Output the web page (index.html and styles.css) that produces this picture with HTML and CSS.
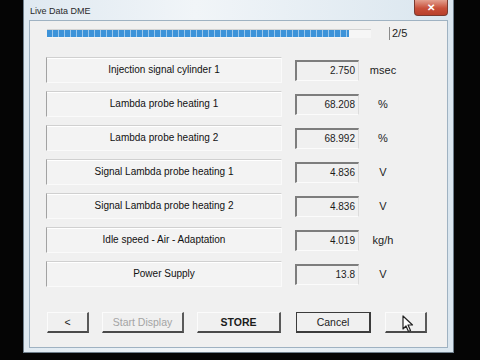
FILE: index.html
```html
<!DOCTYPE html>
<html lang="en">
<head>
    <meta charset="UTF-8">
    <title>Live Data DME</title>
    <link rel="stylesheet" href="styles.css">
</head>
<body>
    <div class="window">
        <!-- Titelleiste -->
        <div class="titlebar">
            <span class="title">Live Data DME</span>
            <span class="close">&#10005;</span>
        </div>

        <div class="client">
            <!-- Fortschritt -->
            <div class="progress-row">
                <div class="progress"><div class="fill" style="width: 302px"></div></div>
                <div class="step">2/5</div>
            </div>

            <!-- Messwerte -->
            <div class="rows">
                <div class="row">
                    <div class="label">Injection signal cylinder 1</div>
                    <div class="value">2.750</div>
                    <div class="unit">msec</div>
                </div>
                <div class="row">
                    <div class="label">Lambda probe heating 1</div>
                    <div class="value">68.208</div>
                    <div class="unit">%</div>
                </div>
                <div class="row">
                    <div class="label">Lambda probe heating 2</div>
                    <div class="value">68.992</div>
                    <div class="unit">%</div>
                </div>
                <div class="row">
                    <div class="label">Signal Lambda probe heating 1</div>
                    <div class="value">4.836</div>
                    <div class="unit">V</div>
                </div>
                <div class="row">
                    <div class="label">Signal Lambda probe heating 2</div>
                    <div class="value">4.836</div>
                    <div class="unit">V</div>
                </div>
                <div class="row">
                    <div class="label">Idle speed - Air - Adaptation</div>
                    <div class="value">4.019</div>
                    <div class="unit">kg/h</div>
                </div>
                <div class="row">
                    <div class="label">Power Supply</div>
                    <div class="value">13.8</div>
                    <div class="unit">V</div>
                </div>
            </div>

            <!-- Knöpfe unten -->
            <div class="buttons">
                <button class="btn btn-small">&lt;</button>
                <button class="btn btn-start" disabled>Start Display</button>
                <button class="btn btn-store">STORE</button>
                <button class="btn btn-cancel">Cancel</button>
                <button class="btn btn-small btn-next">
                    <svg class="cursor" width="12" height="18" viewBox="0 0 12 18">
                        <path d="M1 1 L1 14 L4 11 L6.5 16.5 L8.5 15.5 L6 10 L10.5 10 Z" fill="#fff" stroke="#222" stroke-width="1.2" stroke-linejoin="round"/>
                    </svg>
                </button>
            </div>
        </div>
    </div>
</body>
</html>
```

FILE: styles.css
```css
/* Grundlayout */
* {
    margin: 0;
    padding: 0;
    box-sizing: border-box;
}

body {
    background-color: #050505;
    font-family: "Liberation Sans", Arial, sans-serif;
    font-size: 11px;
    color: #1c1c1c;
    width: 480px;
    height: 360px;
    overflow: hidden;
}

.window {
    margin-left: 23px;
    width: 431px;
    height: 353px;
    padding: 0 5px 5px 5px;
    background: linear-gradient(90deg, #dfe9f1, #f1f5f8 40%, #dae6ef);
    border: 1px solid #6f7f8c;
    border-top: none;
}

/* Titelleiste */
.titlebar {
    display: flex;
    align-items: flex-start;
    height: 20px;
}

.title {
    padding: 6px 0 0 1px;
    font-size: 9px;
    color: #2a2a2a;
}

.close {
    margin-left: auto;
    width: 34px;
    height: 16px;
    display: flex;
    justify-content: center;
    align-items: center;
    background: linear-gradient(#e3a08f, #c8503a 55%, #b8402c);
    border: 1px solid #7a3a30;
    border-top: none;
    border-radius: 0 0 4px 4px;
    color: #fff;
    font-size: 10px;
    font-weight: bold;
}

.client {
    height: 328px;
    background-color: #f0f0f0;
    border: 1px solid #9fb2c2;
    padding: 6px 0 0 16px;
}

/* Fortschrittsbalken */
.progress-row {
    display: flex;
    align-items: center;
    height: 12px;
}

.progress {
    margin-left: 1px;
    width: 324px;
    height: 9px;
    background-color: #f6f6f6;
    border-top: 1px solid #d4d4d4;
}

.fill {
    height: 7px;
    background: repeating-linear-gradient(90deg, #3d93d9 0 5px, #9cc8ec 5px 6px);
}

.step {
    margin-left: 18px;
    height: 13px;
    padding-left: 2px;
    border-left: 1px solid #8a8a8a;
    line-height: 13px;
}

/* Zeilen */
.rows {
    display: flex;
    flex-direction: column;
    gap: 8px;
    margin-top: 18px;
}

.row {
    display: flex;
    align-items: center;
    height: 26px;
}

.label {
    width: 236px;
    height: 26px;
    line-height: 23px;
    text-align: center;
    font-size: 10px;
    color: #111;
    background-color: #f3f3f3;
    border-top: 1px solid #d0d0d0;
    border-left: 1px solid #a2a2a2;
    border-right: 1px solid #fafafa;
    border-bottom: 1px solid #fafafa;
    box-shadow: inset 0 1px #ffffff;
}

.value {
    margin-left: 13px;
    width: 64px;
    height: 21px;
    line-height: 18px;
    padding-right: 3px;
    text-align: right;
    font-size: 10px;
    background-color: #f0f0f0;
    border-top: 2px solid #7d7d7d;
    border-left: 2px solid #7d7d7d;
    border-right: 1px solid #dcdcdc;
    border-bottom: 1px solid #fbfbfb;
}

.unit {
    margin-left: 10px;
    width: 28px;
    text-align: center;
    font-size: 11px;
}

/* Knöpfe */
.buttons {
    display: flex;
    gap: 13px;
    margin-top: 25px;
    margin-left: 1px;
}

.btn {
    height: 21px;
    font-family: "Liberation Sans", Arial, sans-serif;
    font-size: 10.5px;
    color: #1c1c1c;
    background-color: #f0f0f0;
    border-top: 1px solid #fbfbfb;
    border-left: 1px solid #fbfbfb;
    border-right: 2px solid #5a5a5a;
    border-bottom: 2px solid #4a4a4a;
}

.btn-small {
    width: 42px;
}

.btn-start {
    width: 82px;
    color: #a4a4a4;
}

.btn-store {
    width: 84px;
    font-weight: bold;
    font-size: 10.5px;
}

.btn-cancel {
    width: 75px;
    margin-left: 2px;
    border: 1px solid #3c3c3c;
    border-right: 2px solid #3c3c3c;
    border-bottom: 2px solid #3c3c3c;
}

.btn-next {
    margin-left: 1px;
    display: flex;
    justify-content: center;
    align-items: flex-start;
    padding-top: 2px;
}

.cursor {
    margin-left: 4px;
}
```
